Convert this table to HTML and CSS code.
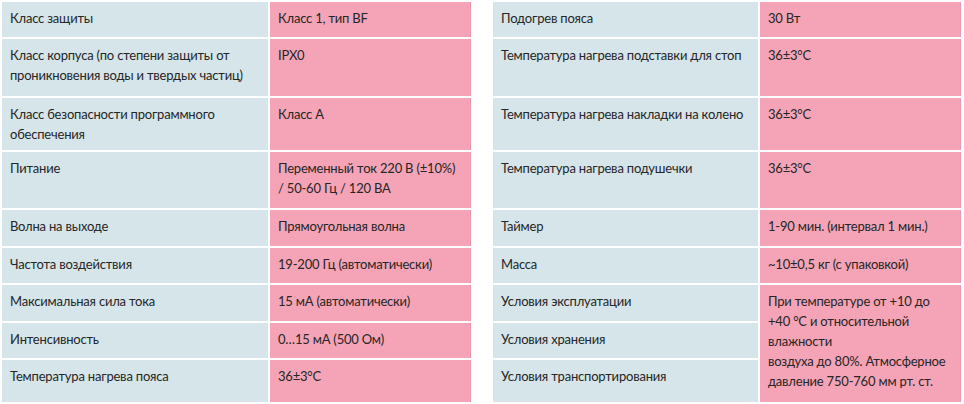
FILE: index.html
```html
<!DOCTYPE html>
<html lang="ru">
<head>
<meta charset="utf-8">
<title>Характеристики</title>
<link rel="stylesheet" href="styles.css">
</head>
<body>
<div class="specs">
  <table class="spec spec-left">
    <colgroup><col class="c-label-l"><col class="c-value"></colgroup>
    <tbody>
      <tr class="r1"><td class="label">Класс защиты</td><td class="value">Класс 1, тип BF</td></tr>
      <tr class="r2"><td class="label">Класс корпуса (по степени защиты от<br>проникновения воды и твердых частиц)</td><td class="value">IPX0</td></tr>
      <tr class="r3"><td class="label">Класс безопасности программного<br>обеспечения</td><td class="value">Класс А</td></tr>
      <tr class="r4"><td class="label">Питание</td><td class="value">Переменный ток 220 В (±10%)<br>/ 50-60 Гц / 120 ВА</td></tr>
      <tr class="r5"><td class="label">Волна на выходе</td><td class="value">Прямоугольная волна</td></tr>
      <tr class="r6"><td class="label">Частота воздействия</td><td class="value">19-200 Гц (автоматически)</td></tr>
      <tr class="r7"><td class="label">Максимальная сила тока</td><td class="value">15 мА (автоматически)</td></tr>
      <tr class="r8"><td class="label">Интенсивность</td><td class="value">0…15 мА (500 Ом)</td></tr>
      <tr class="r9"><td class="label">Температура нагрева пояса</td><td class="value">36±3°C</td></tr>
    </tbody>
  </table>
  <table class="spec spec-right">
    <colgroup><col class="c-label-r"><col class="c-value"></colgroup>
    <tbody>
      <tr class="r1"><td class="label">Подогрев пояса</td><td class="value">30 Вт</td></tr>
      <tr class="r2"><td class="label">Температура нагрева подставки для стоп</td><td class="value">36±3°C</td></tr>
      <tr class="r3"><td class="label">Температура нагрева накладки на колено</td><td class="value">36±3°C</td></tr>
      <tr class="r4"><td class="label">Температура нагрева подушечки</td><td class="value">36±3°C</td></tr>
      <tr class="r5"><td class="label">Таймер</td><td class="value">1-90 мин. (интервал 1 мин.)</td></tr>
      <tr class="r6"><td class="label">Масса</td><td class="value">~10±0,5 кг (с упаковкой)</td></tr>
      <tr class="r7"><td class="label">Условия эксплуатации</td><td class="value" rowspan="3">При температуре от +10 до<br>+40 °C и относительной<br>влажности<br>воздуха до 80%. Атмосферное<br>давление 750-760 мм рт. ст.</td></tr>
      <tr class="r8"><td class="label">Условия хранения</td></tr>
      <tr class="r9"><td class="label">Условия транспортирования</td></tr>
    </tbody>
  </table>
</div>
</body>
</html>
```

FILE: styles.css
```css
html, body {
  margin: 0;
  padding: 0;
  background: #ffffff;
}

body {
  font-family: Lato, "Open Sans", "Liberation Sans", sans-serif;
  font-size: 13px;
  letter-spacing: -0.2px;
  line-height: 20px;
  color: #262626;
}

.specs {
  display: flex;
  gap: 18px;
  width: 964px;
  height: 404px;
  overflow: hidden;
}

.spec {
  border-collapse: separate;
  border-spacing: 2px;
  table-layout: fixed;
  flex: none;
}

.spec-left { width: 473px; }
.spec-right { width: 472px; }

.c-label-l { width: 266px; }
.c-label-r { width: 265px; }
.c-value { width: 201px; }

.spec td {
  padding: 6px 4px 0 8px;
  vertical-align: top;
  box-sizing: border-box;
  white-space: nowrap;
  overflow: hidden;
}

.label {
  background: #d5e5e9;
}

.value {
  background: #f4a4b6;
  box-shadow: inset -1px 0 0 #eb9aad;
}

.r1 { height: 35px; }
.r2 { height: 57px; }
.r3 { height: 52px; }
.r4 { height: 56px; }
.r5 { height: 36px; }
.r6 { height: 35px; }
.r7 { height: 36px; }
.r8 { height: 35px; }
.r9 { height: 42px; }
```
